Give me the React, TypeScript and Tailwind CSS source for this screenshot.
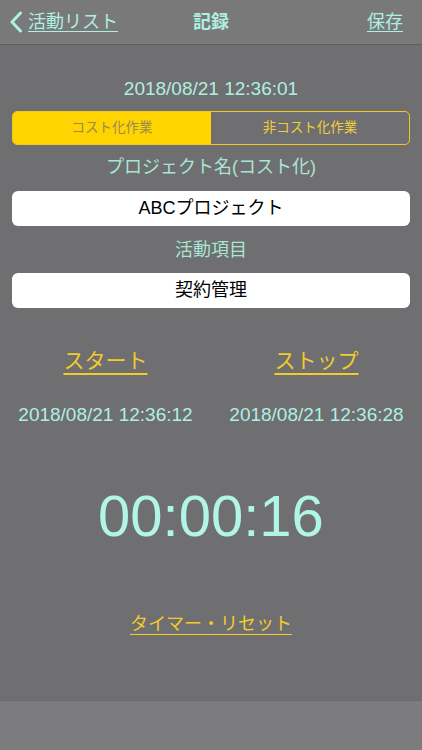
import React from "react";

const font = { fontFamily: '"Liberation Sans", "Noto Sans CJK JP", sans-serif' };

export default function App() {
  return (
    <div className="flex min-h-screen w-full flex-col bg-[#6f6e71]" style={font}>
      {/* Nav bar */}
      <div className="relative flex h-[45px] items-center justify-between border-b border-[#5f5f61] bg-[#797979] px-[9px]">
        <div className="flex items-center gap-[5px] text-[#aef0e0]">
          <svg width="14" height="22" viewBox="0 0 14 22" fill="none">
            <path d="M11.5 2 L3 11 L11.5 20" stroke="#aef0e0" strokeWidth="3" strokeLinecap="round" strokeLinejoin="round" />
          </svg>
          <span className="text-[18px] leading-[22px] underline underline-offset-[3px] decoration-1">活動リスト</span>
        </div>
        <span className="absolute left-1/2 -translate-x-1/2 text-[18px] font-bold leading-[22px] text-[#aef0e0]">記録</span>
        <span className="mr-[10px] text-[18px] leading-[22px] text-[#aef0e0] underline underline-offset-[3px] decoration-1">保存</span>
      </div>

      {/* Body */}
      <div className="flex flex-col items-center px-[12px]">
        <div className="mt-[33px] text-[19px] leading-[22px] text-[#aef0e0]">2018/08/21 12:36:01</div>

        <div className="mt-[11px] flex h-[34px] w-full overflow-hidden rounded-[5px] border border-[#f0c91e]">
          <div className="flex flex-1 items-center justify-center bg-[#ffd400] text-[13.5px] text-[#9a8a4e]">コスト化作業</div>
          <div className="flex flex-1 items-center justify-center text-[13.5px] text-[#f2cf38]">非コスト化作業</div>
        </div>

        <div className="mt-[10px] text-[18px] leading-[24px] text-[#a8e6d3]">プロジェクト名(コスト化)</div>
        <div className="mt-[12px] flex h-[35px] w-full items-center justify-center rounded-[6px] bg-white text-[18px] text-black">ABCプロジェクト</div>

        <div className="mt-[12px] text-[18px] leading-[24px] text-[#a8e6d3]">活動項目</div>
        <div className="mt-[11px] flex h-[35px] w-full items-center justify-center rounded-[6px] bg-white text-[18px] text-black">契約管理</div>
      </div>

      <div className="mt-[39px] grid grid-cols-2">
        <div className="flex justify-center">
          <span className="text-[21px] leading-[28px] text-[#f2cc2c] underline underline-offset-[5px] decoration-[1.5px]">スタート</span>
        </div>
        <div className="flex justify-center">
          <span className="text-[21px] leading-[28px] text-[#f2cc2c] underline underline-offset-[5px] decoration-[1.5px]">ストップ</span>
        </div>
      </div>

      <div className="mt-[29px] grid grid-cols-2">
        <div className="flex justify-center text-[19px] leading-[22px] text-[#aef0e0]">2018/08/21 12:36:12</div>
        <div className="flex justify-center text-[19px] leading-[22px] text-[#aef0e0]">2018/08/21 12:36:28</div>
      </div>

      <div className="mt-[55px] flex justify-center text-[58px] leading-[70px] font-light text-[#b0f5e6]">00:00:16</div>

      <div className="mt-[61px] flex justify-center">
        <span className="text-[18px] leading-[24px] text-[#f2cc2c] underline underline-offset-[4px] decoration-1">タイマー・リセット</span>
      </div>

      <div className="flex-1" />

      <div className="h-[50px] border-t border-[#6a6a6c] bg-[#7c7c7e]" />
    </div>
  );
}
